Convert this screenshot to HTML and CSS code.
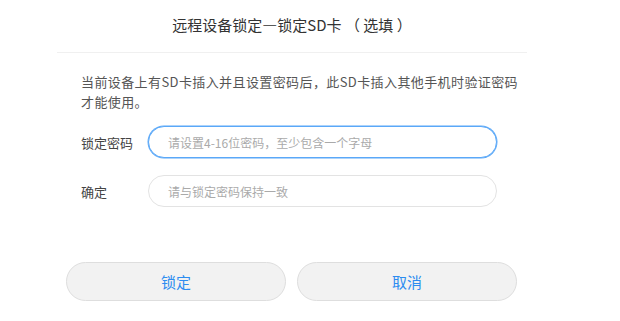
FILE: index.html
```html
<!DOCTYPE html>
<html lang="zh-CN">
<head>
    <meta charset="UTF-8">
    <meta name="viewport" content="width=device-width, initial-scale=1.0">
    <title>锁定SD卡</title>
    <link rel="stylesheet" href="styles.css">
</head>
<body>
    <div class="dialog">
        <div class="dialog-header">
            <h2 class="title">远程设备锁定—锁定SD卡 （ 选填 ）</h2>
        </div>

        <div class="dialog-body">
            <p class="tip">当前设备上有SD卡插入并且设置密码后，此SD卡插入其他手机时验证密码才能使用。</p>

            <div class="row">
                <label class="label" for="pwd">锁定密码</label>
                <input class="field focused" id="pwd" type="password" placeholder="请设置4-16位密码，至少包含一个字母">
            </div>

            <div class="row">
                <label class="label" for="pwd2">确定</label>
                <input class="field" id="pwd2" type="password" placeholder="请与锁定密码保持一致">
            </div>
        </div>

        <div class="dialog-footer">
            <button class="btn">锁定</button>
            <button class="btn">取消</button>
        </div>
    </div>
</body>
</html>
```

FILE: styles.css
```css
/* reset */
html, body {
    margin: 0;
    padding: 0;
    background: #fff;
}

body {
    font-family: "Noto Sans CJK SC", "Noto Sans", sans-serif;
    color: #333;
}

.dialog {
    width: 470px;
    margin-left: 57px;
}

/* title and the thin line under it */
.dialog-header {
    height: 53px;
    border-bottom: 1px solid #f0f0f0;
    box-sizing: border-box;
}

.title {
    margin: 0;
    padding-top: 14px;
    font-size: 15px;
    font-weight: normal;
    line-height: 22px;
    text-align: center;
    color: #333;
}

.dialog-body {
    padding: 19px 6px 0 24px;
}

.tip {
    margin: 0 0 14px;
    font-size: 13px;
    line-height: 20px;
    letter-spacing: 0.4px;
    color: #555;
}

.row {
    display: flex;
    align-items: center;
    margin-bottom: 17px;
}

.label {
    width: 67px;
    font-size: 13px;
    color: #444;
}

.field {
    width: 349px;
    height: 32px;
    box-sizing: border-box;
    padding: 0 19px;
    border: 1px solid #e3e3e3;
    border-radius: 16px;
    font-family: inherit;
    font-size: 12px;
    outline: none;
}

.field::placeholder {
    color: #aaa;
}

/* the first field has the cursor in it */
.focused {
    border-color: #5aa8f8;
    box-shadow: 0 0 0 0.5px #5aa8f8;
}

.dialog-footer {
    display: flex;
    gap: 11px;
    padding: 38px 0 0 9px;
}

.btn {
    width: 220px;
    height: 39px;
    border: 1px solid #dedede;
    border-radius: 20px;
    background: #f2f2f2;
    color: #2d8cf0;
    font-family: inherit;
    font-size: 15px;
}
```
